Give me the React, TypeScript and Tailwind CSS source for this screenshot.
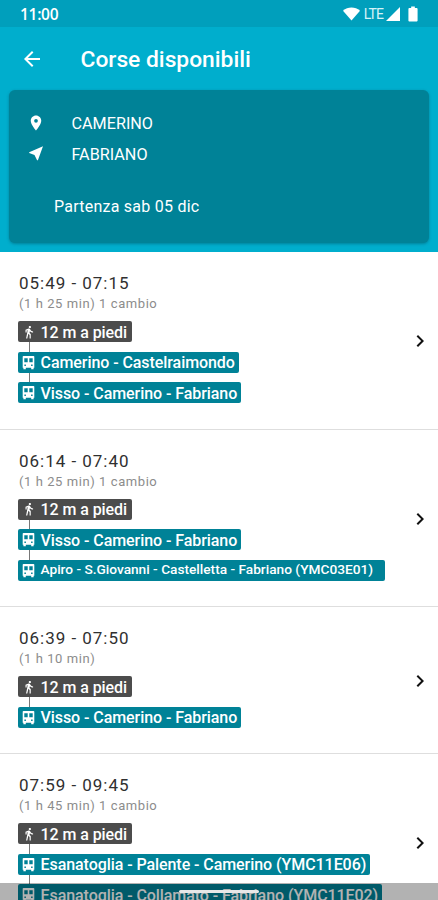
import {
  MdArrowBack,
  MdBatteryFull,
  MdChevronRight,
  MdDirectionsWalk,
  MdPlace,
} from "react-icons/md";

type Tappa = {
  linea: string;
  piedi?: boolean;
  classe: string;
};

type Corsa = {
  orario: string;
  durata: string;
  altezza: string;
  tappe: Tappa[];
};

const testoNormale = "text-[16px] leading-[21px] pt-px tracking-[-0.07px]";

const aPiedi: Tappa = {
  linea: "12 m a piedi",
  piedi: true,
  classe: "w-[114px]",
};

const corse: Corsa[] = [
  {
    orario: "05:49 - 07:15",
    durata: "(1 h 25 min) 1 cambio",
    altezza: "h-[177.5px]",
    tappe: [
      aPiedi,
      { linea: "Camerino - Castelraimondo", classe: "w-[221px]" },
      { linea: "Visso - Camerino - Fabriano", classe: "w-[223px]" },
    ],
  },
  {
    orario: "06:14 - 07:40",
    durata: "(1 h 25 min) 1 cambio",
    altezza: "h-[177.5px]",
    tappe: [
      aPiedi,
      { linea: "Visso - Camerino - Fabriano", classe: "w-[223px]" },
      {
        linea: "Apiro - S.Giovanni - Castelletta - Fabriano (YMC03E01)",
        classe: "w-[366.500px]",
      },
    ],
  },
  {
    orario: "06:39 - 07:50",
    durata: "(1 h 10 min)",
    altezza: "h-[147px]",
    tappe: [
      aPiedi,
      { linea: "Visso - Camerino - Fabriano", classe: "w-[223px]" },
    ],
  },
  {
    orario: "07:59 - 09:45",
    durata: "(1 h 45 min) 1 cambio",
    altezza: "h-[177.5px]",
    tappe: [
      aPiedi,
      {
        linea: "Esanatoglia - Palente - Camerino (YMC11E06)",
        classe: "w-[352px]",
      },
      {
        linea: "Esanatoglia - Collamato - Fabriano (YMC11E02)",
        classe: "w-[364px]",
      },
    ],
  },
];

function BusIcon() {
  return (
    <svg viewBox="0 0 13 15" className="w-[13px] h-[15px]" fill="currentColor">
      <path
        fillRule="evenodd"
        d="M1.500 1h10q.8 0 .8.8v10.900h-.7v1.600H9.200v-1.600H3.800v1.600H1.400v-1.600H.7V1.800q0-.8.8-.8zM2.300 3.300v4h3.400V3.300zM7.300 3.300v4h3.400V3.300zM2.400 9.500v1.400h1.500V9.500zM9.100 9.500v1.400h1.500V9.500z"
      />
    </svg>
  );
}

function FrecciaIcon() {
  return (
    <svg viewBox="0 0 18 18" className="w-[18px] h-[18px] -mt-[3px]" fill="currentColor">
      <path d="M16 2.200L2.200 8.300v.8l5.300 2 2.600 5.100h.8z" />
    </svg>
  );
}

function StatusBar() {
  return (
    <div className="h-[27px] bg-[#009fbc] flex items-center justify-between pl-[20px] pr-[19px] pt-[2px]">
      <span className="text-[15.5px] font-semibold font-['Open_Sans',sans-serif] tracking-[-0.3px]">
        11:00
      </span>
      <div className="flex items-center -mt-px">
        <svg viewBox="0 0 18 14" className="w-[17px] h-[14px]" fill="currentColor">
          <path d="M0 3.600C5-1 13-1 18 3.600L9 14z" />
        </svg>
        <span className="ml-[4px] text-[14px] leading-[14px] tracking-[-0.9px] text-[#d5f3f8]">
          LTE
        </span>
        <svg viewBox="0 0 14 14" className="ml-[3px] w-[14px] h-[14px]" fill="currentColor">
          <path d="M14 0v14H0z" />
        </svg>
        {/* batteria un po' più larga dell'icona standard */}
        <MdBatteryFull
          preserveAspectRatio="none"
          className="ml-[2px] -mr-[5px] w-[22px] h-[18px]"
        />
      </div>
    </div>
  );
}

function TappaBadge({ tappa, ultima }: { tappa: Tappa; ultima: boolean }) {
  // le linee con il nome lungo usano un carattere più piccolo
  const lunga = tappa.linea.length > 50;

  return (
    <div>
      <div
        className={`h-[21px] flex items-center pl-[4px] rounded-[2px] text-white font-medium whitespace-nowrap ${
          tappa.piedi ? "bg-[#4c4c4c]" : "bg-[#008297]"
        } ${tappa.classe}`}
      >
        <span className="w-[18.5px] shrink-0 flex">
          {tappa.piedi ? <MdDirectionsWalk size={14} /> : <BusIcon />}
        </span>
        <span
          className={
            lunga
              ? "text-[13.7px] leading-[19px] pb-[2px] tracking-[-0.01px]"
              : testoNormale
          }
        >
          {tappa.linea}
        </span>
      </div>
      {!ultima && <div className="ml-[11px] w-px h-[9.6px] bg-[#777]" />}
    </div>
  );
}

function CorsaRow({ corsa }: { corsa: Corsa }) {
  return (
    <div
      className={`flex items-center shrink-0 border-b border-[#dedede] pl-[18px] ${corsa.altezza}`}
    >
      <div className="flex-1 self-start pt-[20px]">
        <p className="pl-px text-[17px] leading-[22px] tracking-[0.98px] text-[#303030]">
          {corsa.orario}
        </p>
        <p className="pl-px pt-px text-[13px] leading-[18px] tracking-[0.57px] text-[#8c8c8c]">
          {corsa.durata}
        </p>
        <div className="pt-[8px]">
          {corsa.tappe.map((tappa, i) => (
            <TappaBadge
              key={tappa.linea}
              tappa={tappa}
              ultima={i === corsa.tappe.length - 1}
            />
          ))}
        </div>
      </div>
      <MdChevronRight className="w-[24px] h-[24px] mr-[6px] mt-[1.5px] text-[#111]" />
    </div>
  );
}

export default function App() {
  return (
    <div className="relative w-[438px] h-[900px] overflow-hidden bg-white flex flex-col font-[Roboto,sans-serif]">
      <header className="h-[252px] shrink-0 bg-[#00aecd] text-white">
        <StatusBar />
        <div className="h-[63px] flex items-center pl-[20px] pt-px">
          <MdArrowBack size={24} />
          <h1 className="ml-[36.5px] pt-[3px] text-[22.8px] font-medium">
            Corse disponibili
          </h1>
        </div>
        <div className="mx-[9px] h-[153px] rounded-[6px] bg-[#008297] shadow-[0_1px_3px_rgba(0,60,75,0.4)] pt-[18px]">
          <div className="h-[31px] flex items-center pl-[18px]">
            <MdPlace size={18} className="-mt-[2px]" />
            <span className="ml-[26.5px] pt-[2px] text-[16.2px]">CAMERINO</span>
          </div>
          <div className="h-[31px] flex items-center pl-[18px]">
            <FrecciaIcon />
            <span className="ml-[26.5px] pt-[2px] text-[16.2px]">FABRIANO</span>
          </div>
          <p className="pl-[45px] pt-[24px] text-[16px] leading-[26px] tracking-[0.24px]">
            Partenza sab 05 dic
          </p>
        </div>
      </header>

      <main className="flex flex-col">
        {corse.map((corsa) => (
          <CorsaRow key={corsa.orario} corsa={corsa} />
        ))}
      </main>

      {/* Barra di navigazione del telefono */}
      <div className="absolute inset-x-0 bottom-0 h-[17px] bg-black/30 flex justify-center items-center">
        <div className="w-[80px] h-[3px] rounded-full bg-[#e8e8e8]" />
      </div>
    </div>
  );
}
